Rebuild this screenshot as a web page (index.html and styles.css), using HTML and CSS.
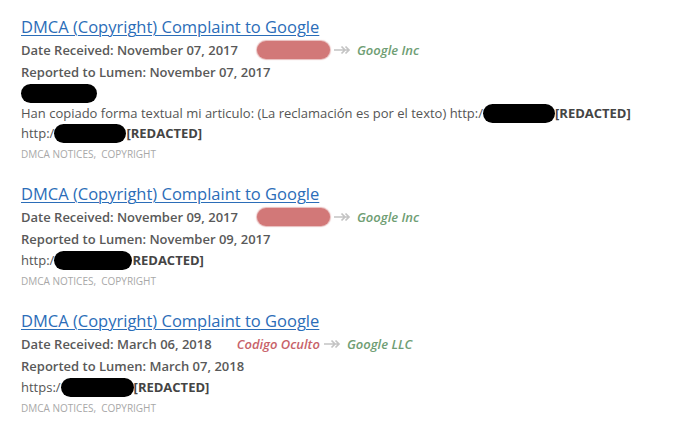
FILE: index.html
```html
<!DOCTYPE html>
<html>
<head>
<meta charset="utf-8">
<link rel="stylesheet" href="styles.css">
</head>
<body>
<div class="list">
  <div class="notice">
    <a class="title" href="#">DMCA (Copyright) Complaint to Google</a>
    <div class="meta"><span class="date">Date Received: November 07, 2017</span><span class="parties"><span class="blob red" style="width:73px"></span><svg class="arrow" viewBox="0 0 18 10" width="18" height="10"><path d="M0 5H14M7.5 1.5L11 5L7.5 8.5M11.5 1.5L15 5L11.5 8.5" fill="none" stroke="#c4c4c4" stroke-width="1.7"/></svg><span class="recipient">Google Inc</span></span></div>
    <div class="meta">Reported to Lumen: November 07, 2017</div>
    <div class="body"><span class="blob black" style="width:76px"></span></div>
    <div class="body">Han copiado forma textual mi articulo: (La reclamación es por el texto) http:/<span class="blob black" style="width:72px"></span><b>[REDACTED]</b></div>
    <div class="body">http:/<span class="blob black" style="width:72px"></span><b>[REDACTED]</b></div>
    <div class="tags">DMCA Notices,&nbsp; Copyright</div>
  </div>
  <div class="notice">
    <a class="title" href="#">DMCA (Copyright) Complaint to Google</a>
    <div class="meta"><span class="date">Date Received: November 09, 2017</span><span class="parties"><span class="blob red" style="width:73px"></span><svg class="arrow" viewBox="0 0 18 10" width="18" height="10"><path d="M0 5H14M7.5 1.5L11 5L7.5 8.5M11.5 1.5L15 5L11.5 8.5" fill="none" stroke="#c4c4c4" stroke-width="1.7"/></svg><span class="recipient">Google Inc</span></span></div>
    <div class="meta">Reported to Lumen: November 09, 2017</div>
    <div class="body">http:/<span class="blob black" style="width:78px"></span><b>REDACTED]</b></div>
    <div class="tags">DMCA Notices,&nbsp; Copyright</div>
  </div>
  <div class="notice">
    <a class="title" href="#">DMCA (Copyright) Complaint to Google</a>
    <div class="meta"><span class="date">Date Received: March 06, 2018</span><span class="parties"><span class="sender">Codigo Oculto</span><svg class="arrow" viewBox="0 0 18 10" width="18" height="10"><path d="M0 5H14M7.5 1.5L11 5L7.5 8.5M11.5 1.5L15 5L11.5 8.5" fill="none" stroke="#c4c4c4" stroke-width="1.7"/></svg><span class="recipient">Google LLC</span></span></div>
    <div class="meta">Reported to Lumen: March 07, 2018</div>
    <div class="body">https:/<span class="blob black" style="width:73px"></span><b>[REDACTED]</b></div>
    <div class="tags">DMCA Notices,&nbsp; Copyright</div>
  </div>
</div>
</body>
</html>
```

FILE: styles.css
```css
html, body {
  margin: 0;
  padding: 0;
  background: #ffffff;
}
body {
  font-family: "Open Sans", "DejaVu Sans", sans-serif;
  color: #555;
}
.list {
  padding: 15px 0 0 21px;
  display: flex;
  flex-direction: column;
  gap: 18px;
}
.notice {
  display: flex;
  flex-direction: column;
  align-items: flex-start;
}
.title {
  font-size: 16.5px;
  line-height: 24px;
  color: #2b6db8;
  text-decoration: underline;
  text-underline-offset: 2px;
  text-decoration-thickness: 1px;
}
.meta {
  font-size: 13px;
  line-height: 22px;
  font-weight: 600;
  color: #595959;
  display: flex;
  align-items: center;
  white-space: nowrap;
}
.parties {
  display: inline-flex;
  align-items: center;
  margin-left: 25px;
}
.sender {
  font-style: italic;
  color: #c8636a;
}
.recipient {
  font-style: italic;
  color: #6f9e74;
}
.arrow {
  margin: 0 5px 0 4px;
}
.body {
  font-size: 13px;
  line-height: 20px;
  color: #555;
  white-space: nowrap;
  display: flex;
  align-items: center;
  min-height: 20px;
}
.body b {
  font-weight: 700;
  color: #444;
}
.blob {
  display: inline-block;
  height: 19px;
  border-radius: 10px;
}
.blob.black {
  background: #000;
}
.blob.red {
  margin-left: -6px;
  background: #d27878;
  height: 18px;
  border-radius: 9px;
  box-shadow: 0 0 1px 1px rgba(210, 120, 120, 0.5);
}
.tags {
  margin-top: 1px;
  font-size: 10px;
  line-height: 20px;
  font-weight: 400;
  text-transform: uppercase;
  color: #a8a8a8;
}
```
